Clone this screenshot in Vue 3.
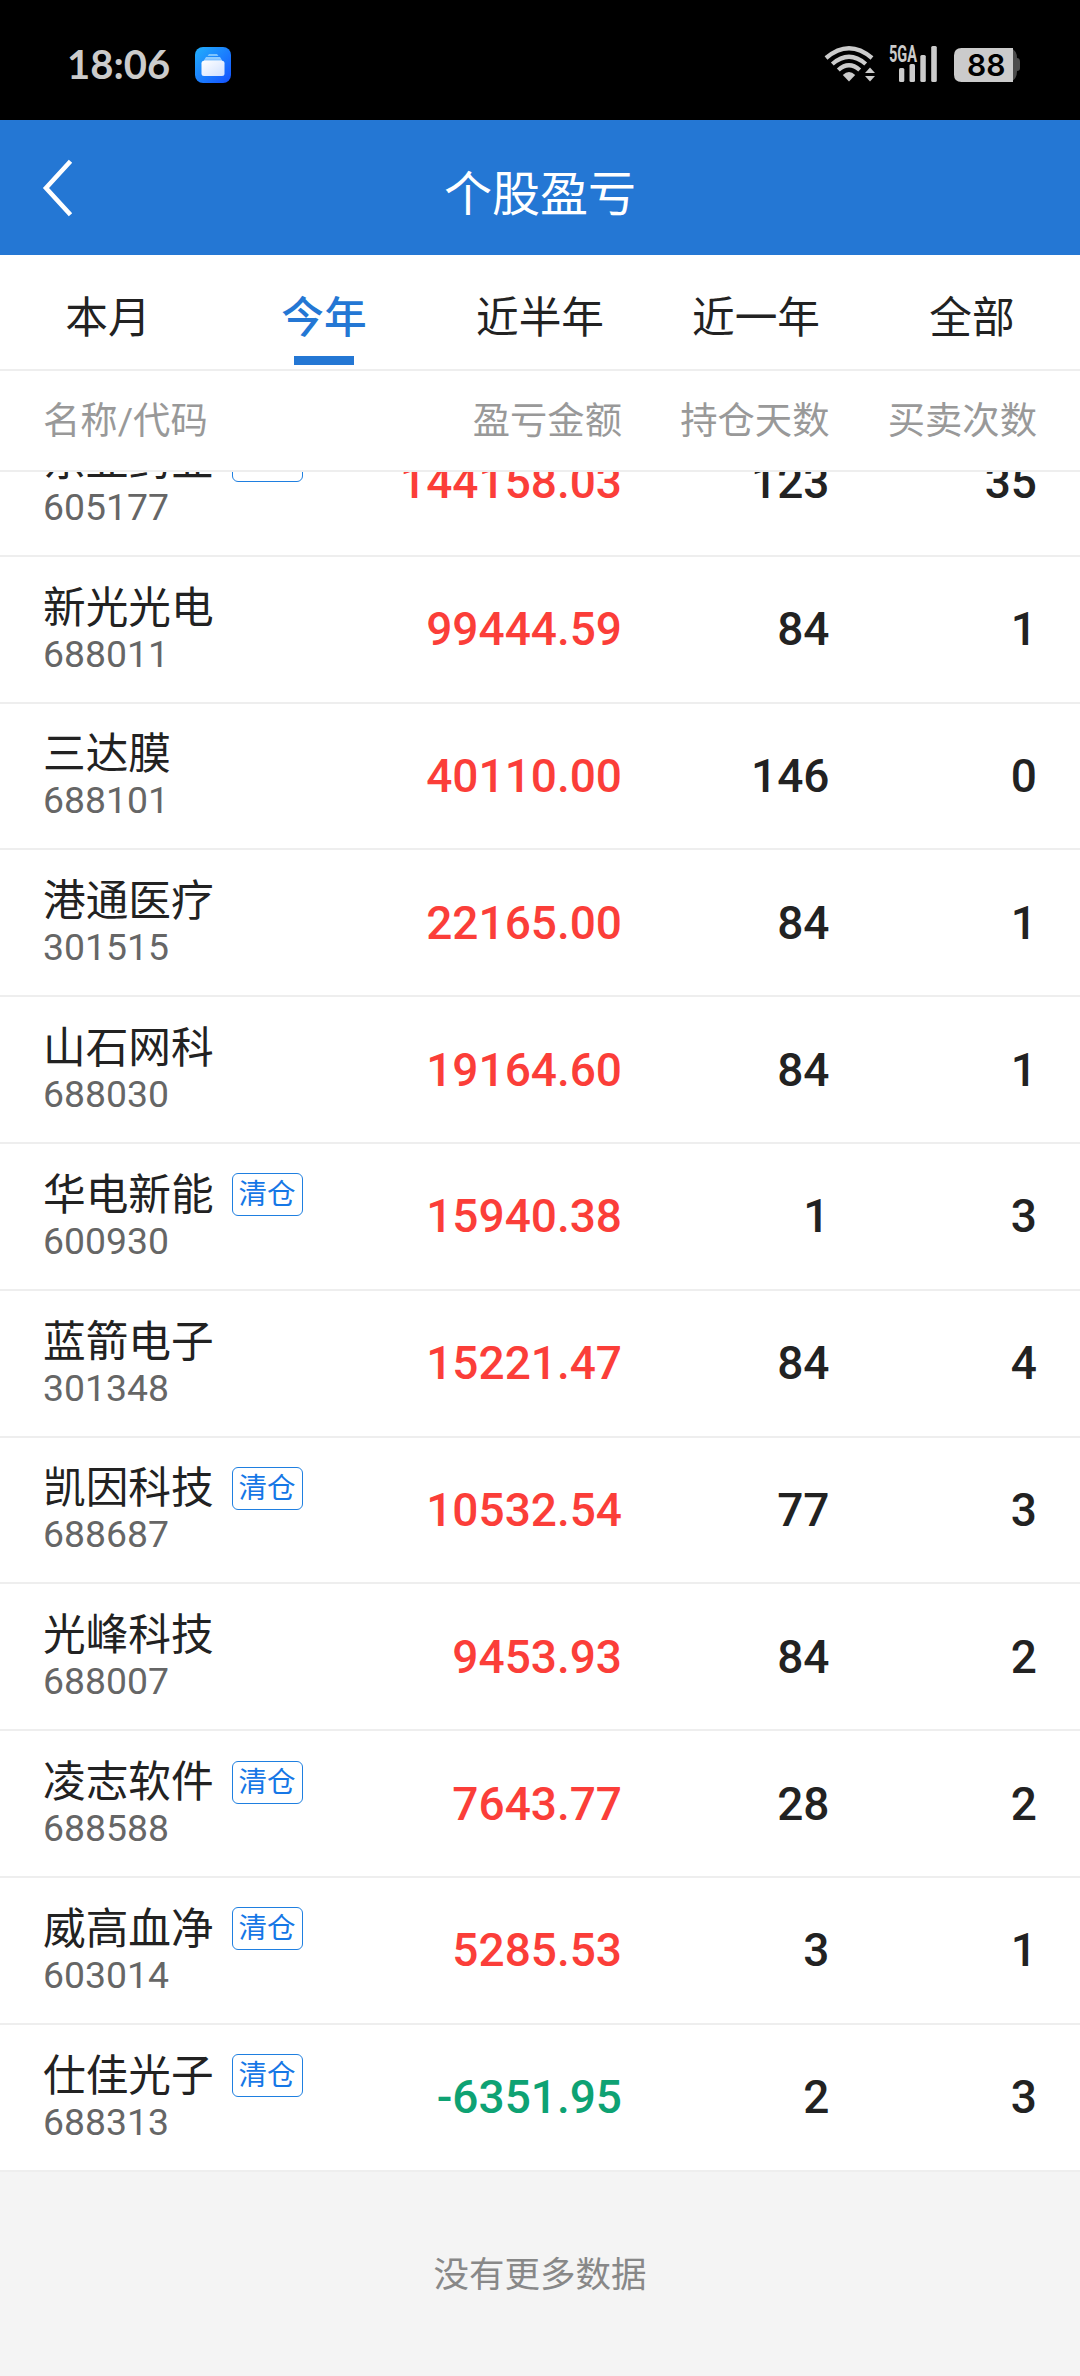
<script setup>
import { ref } from 'vue';

const pestanas = ['本月', '今年', '近半年', '近一年', '全部'];
const activa = ref('今年');

const acciones = ref([
    { codigo: '605177', nombre: '东亚药业', cerrada: true, importe: '144158.03', dias: 123, veces: 35 },
    { codigo: '688011', nombre: '新光光电', cerrada: false, importe: '99444.59', dias: 84, veces: 1 },
    { codigo: '688101', nombre: '三达膜', cerrada: false, importe: '40110.00', dias: 146, veces: 0 },
    { codigo: '301515', nombre: '港通医疗', cerrada: false, importe: '22165.00', dias: 84, veces: 1 },
    { codigo: '688030', nombre: '山石网科', cerrada: false, importe: '19164.60', dias: 84, veces: 1 },
    { codigo: '600930', nombre: '华电新能', cerrada: true, importe: '15940.38', dias: 1, veces: 3 },
    { codigo: '301348', nombre: '蓝箭电子', cerrada: false, importe: '15221.47', dias: 84, veces: 4 },
    { codigo: '688687', nombre: '凯因科技', cerrada: true, importe: '10532.54', dias: 77, veces: 3 },
    { codigo: '688007', nombre: '光峰科技', cerrada: false, importe: '9453.93', dias: 84, veces: 2 },
    { codigo: '688588', nombre: '凌志软件', cerrada: true, importe: '7643.77', dias: 28, veces: 2 },
    { codigo: '603014', nombre: '威高血净', cerrada: true, importe: '5285.53', dias: 3, veces: 1 },
    { codigo: '688313', nombre: '仕佳光子', cerrada: true, importe: '-6351.95', dias: 2, veces: 3 },
]);
</script>

<template>
    <div class="pantalla">
        <!--Barra de estado del móvil-->
        <div class="estado">
            <span class="hora">18:06</span>
            <svg class="app" width="36" height="36" viewBox="0 0 36 36">
                <defs>
                    <linearGradient id="fondoApp" x1="0" y1="0" x2="1" y2="1">
                        <stop offset="0" stop-color="#22b0fc" />
                        <stop offset="1" stop-color="#1450ff" />
                    </linearGradient>
                    <linearGradient id="tarjetaApp" x1="0" y1="0" x2="1" y2="1">
                        <stop offset="0" stop-color="#ffffff" />
                        <stop offset="1" stop-color="#cfe0ff" />
                    </linearGradient>
                </defs>
                <rect width="36" height="36" rx="8" fill="url(#fondoApp)" />
                <path d="M14 7h8l1.500 2h-11z" fill="#7cc4ff" />
                <path d="M11 10h14l1.500 2.500h-17z" fill="#8fcbff" />
                <path d="M9.500 12.500h17l1.500 3h-20z" fill="#a9d5ff" />
                <rect x="6.500" y="13.700" width="23" height="15.300" rx="2.500" fill="url(#tarjetaApp)" />
            </svg>
            <svg class="iconos" width="200" height="40" viewBox="824 44 200 40">
                <g fill="none" stroke="#cbcbcb" stroke-width="4.300">
                    <path d="M826 58Q849 38.500 872 58" />
                    <path d="M832.300 64Q849 49.500 865.700 64" />
                    <path d="M838.300 70Q849 60.500 859.700 70" />
                </g>
                <g fill="#cbcbcb">
                    <path d="M842.800 75Q849 69 855.200 75L849 81.500z" />
                    <path d="M870 67.500l5 5.500h-10z" />
                    <path d="M870 81.500l5-5.500h-10z" />
                    <rect x="899" y="68" width="5.300" height="14" rx="1.500" />
                    <rect x="909.500" y="64" width="5.500" height="18" rx="1.500" />
                    <rect x="920.300" y="55" width="5.500" height="27" rx="1.500" />
                    <rect x="931.200" y="46" width="5.600" height="36" rx="1.500" />
                    <text class="red" x="889" y="61.500" textLength="28" lengthAdjust="spacingAndGlyphs">5GA</text>
                </g>
                <path d="M1011 48.500q6 2 6 9.500 3 0 3 4v6q0 3-3 3 0 8-6 10.500z" fill="#4b4b4b" />
                <path d="M961.500 48h51.500v34h-51.500q-7.500 0-7.500-7.500v-19q0-7.500 7.500-7.500z" fill="#cbcbcb" />
                <text class="bateria" x="986.300" y="76.300" text-anchor="middle">88</text>
            </svg>
        </div>

        <header class="cabecera">
            <svg class="atras" width="32" height="60" viewBox="0 0 32 60">
                <path d="M28.500 3.200L4 30l24.500 26.800" fill="none" stroke="#fff" stroke-width="4.600" />
            </svg>
            <h1>个股盈亏</h1>
        </header>

        <nav class="pestanas">
            <button v-for="p in pestanas" :key="p" :class="{ activa: p === activa }" @click="activa = p">{{ p }}</button>
        </nav>

        <div class="fila titulos">
            <span class="colNombre">名称/代码</span>
            <span class="colImporte">盈亏金额</span>
            <span class="colNum">持仓天数</span>
            <span class="colNum">买卖次数</span>
        </div>

        <div class="lista">
            <div class="contenido">
                <div v-for="a in acciones" :key="a.codigo" class="fila accion">
                    <div class="colNombre">
                        <div class="nombre">
                            <span>{{ a.nombre }}</span>
                            <span v-if="a.cerrada" class="etiqueta">清仓</span>
                        </div>
                        <div class="codigo">{{ a.codigo }}</div>
                    </div>
                    <span class="colImporte" :class="a.importe.startsWith('-') ? 'baja' : 'sube'">{{ a.importe }}</span>
                    <span class="colNum">{{ a.dias }}</span>
                    <span class="colNum">{{ a.veces }}</span>
                </div>
            </div>
        </div>

        <footer class="fin">没有更多数据</footer>
    </div>
</template>

<style>
body {
    margin: 0;
    background: #f4f4f4;
}
</style>

<style scoped>
.pantalla {
    display: flex;
    flex-direction: column;
    width: 1080px;
    height: 2376px;
    overflow: hidden;
    background: #f4f4f4;
    color: #222;
    font-family: Roboto, "Noto Sans CJK SC", sans-serif;
}

.pantalla * {
    box-sizing: border-box;
}

.estado {
    display: flex;
    flex: none;
    align-items: center;
    height: 120px;
    padding: 8px 56px 0 67px;
    background: #000;
}

.hora {
    width: 128px;
    color: #cbcbcb;
    font: 700 40px/48px Lato, sans-serif;
}

.app {
    margin-top: 2px;
}

.iconos {
    margin-left: auto;
}

.red {
    font: 700 23px Roboto, sans-serif;
}

.bateria {
    font: 600 30px Inter, sans-serif;
    fill: #000;
}

.cabecera {
    display: flex;
    flex: none;
    align-items: center;
    height: 135px;
    padding: 0 42px;
    background: #2477d4;
    color: #fff;
}

.cabecera h1 {
    flex: 1;
    margin: 15px 32px 0 0;
    font-size: 48px;
    font-weight: 400;
    line-height: 60px;
    text-align: center;
}

.pestanas {
    display: flex;
    flex: none;
    height: 116px;
    border-bottom: 2px solid #eee;
    background: #fff;
}

.pestanas button {
    position: relative;
    flex: 1;
    padding: 12px 0 0;
    border: 0;
    background: none;
    color: #222;
    font-family: inherit;
    font-size: 42.67px;
    line-height: 60px;
}

.pestanas .activa {
    color: #2477d4;
    font-weight: 500;
}

.pestanas .activa::after {
    content: "";
    position: absolute;
    bottom: 4px;
    left: 78px;
    width: 60px;
    height: 9px;
    background: #2477d4;
}

.fila {
    display: flex;
    flex: none;
    align-items: center;
    padding: 0 43px;
    border-bottom: 2px solid #eee;
    background: #fff;
}

.titulos {
    height: 101px;
    padding-bottom: 5px;
    color: #999;
    font-size: 37.33px;
}

.colNombre {
    width: 301px;
}

.colImporte {
    width: 278px;
    text-align: right;
}

.colNum {
    width: 207.500px;
    text-align: right;
}

.lista {
    display: flex;
    flex: none;
    flex-direction: column;
    justify-content: flex-end;
    height: 1699.500px;
    overflow: hidden;
}

.accion {
    height: 146.800px;
    font-size: 46px;
    font-weight: 500;
}

.nombre {
    display: flex;
    align-items: center;
    gap: 18px;
    height: 48px;
    margin-top: 1px;
    font-size: 42.67px;
    font-weight: 400;
    line-height: 48px;
}

.etiqueta {
    width: 71px;
    height: 43px;
    border: 1.500px solid #1f7fe0;
    border-radius: 6px;
    color: #1677e6;
    font-size: 28.500px;
    line-height: 41px;
    text-align: center;
}

.codigo {
    height: 44px;
    color: #666;
    font-size: 37.33px;
    font-weight: 400;
    line-height: 44px;
}

.sube {
    color: #fb3e39;
}

.baja {
    color: #0ea273;
}

.fin {
    padding-top: 78px;
    color: #888;
    font-size: 35.500px;
    line-height: 50px;
    text-align: center;
}
</style>
